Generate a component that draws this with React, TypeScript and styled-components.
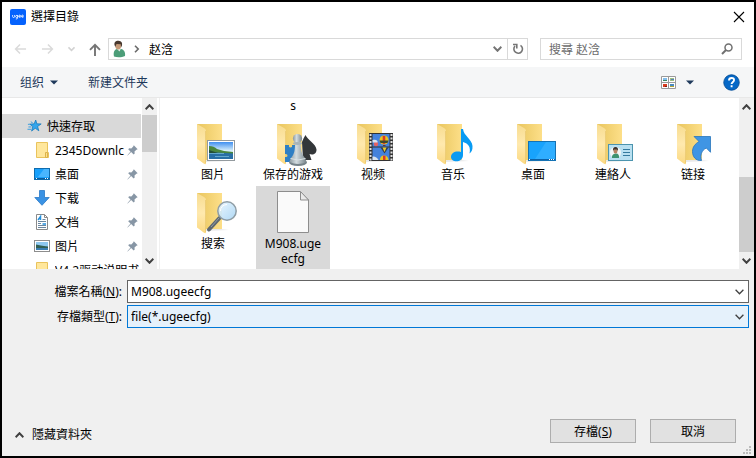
import React from "react";
import styled, { createGlobalStyle } from "styled-components";

const GlobalStyle = createGlobalStyle`
  *, *::before, *::after { box-sizing: border-box; }
  body {
    margin: 0;
    background: #000;
    color: #000;
    font-family: "Noto Sans", "Noto Sans CJK TC", "Noto Sans CJK SC", sans-serif;
    font-size: 12px;
    line-height: 15px;
  }
  button, input, select { font: inherit; color: inherit; margin: 0; }
  button { border: 0; padding: 0; background: none; }
  svg { display: block; flex: none; }
`;

/* ---------- frame ---------- */

const Window = styled.div`
  position: relative;
`;

const Dialog = styled.main`
  display: flex;
  flex-direction: column;
  min-height: 100vh;
  border: 2px solid #000;
  background: #fff;
`;

const TitleBar = styled.header`
  display: flex;
  align-items: center;
  gap: 5px;
  height: 29px;
  padding: 0 9px 0 8px;
`;

const AppBadge = styled.span`
  display: flex;
  align-items: center;
  justify-content: center;
  width: 16px;
  height: 16px;
  border-radius: 2px;
  background: #0562fd;
`;

const Title = styled.h1`
  flex: 1;
  margin: 0;
  font-size: 12px;
  font-weight: 400;
`;

const IconButton = styled.button`
  display: flex;
  align-items: center;
  justify-content: center;
  flex: none;
`;

const NavBar = styled.nav`
  display: flex;
  align-items: center;
  height: 36px;
  padding: 0 12px;
`;

const NavButtons = styled.div`
  display: flex;
  align-items: center;
  justify-content: space-between;
  flex: none;
  width: 94px;
  padding-right: 7px;
`;

const AddressBar = styled.div`
  display: flex;
  align-items: center;
  flex: 1;
  height: 22px;
  border: 1px solid #d9d9d9;
`;

const UserButton = styled(IconButton)`
  gap: 8px;
  padding-left: 3px;
`;

const Crumb = styled.button`
  flex: 1;
  padding-left: 9px;
  text-align: left;
`;

const AddressButton = styled(IconButton)<{ $divided?: boolean }>`
  width: 20px;
  height: 20px;
  border-left: ${(p) => (p.$divided ? "1px solid #d9d9d9" : "0")};
`;

const SearchBox = styled.label`
  display: flex;
  align-items: center;
  flex: none;
  width: 202px;
  height: 22px;
  margin-left: 12px;
  padding: 0 8px;
  border: 1px solid #d9d9d9;
`;

const SearchInput = styled.input`
  flex: 1;
  min-width: 0;
  border: 0;
  padding: 0;
  outline: 0;
  background: none;
  &::placeholder { color: #6d6d6d; opacity: 1; }
`;

const Toolbar = styled.div`
  display: flex;
  align-items: center;
  height: 31px;
  padding: 0 14px 0 18px;
  border-bottom: 1px solid #e8e8e8;
  background: #f5f6f7;
  color: #1e395b;
`;

const ToolButton = styled.button`
  display: flex;
  align-items: center;
  gap: 6px;
  margin-right: 30px;
`;

const ViewTools = styled.div`
  display: flex;
  align-items: center;
  margin-left: auto;
  gap: 10px;
`;

const HelpButton = styled(IconButton)`
  margin-left: 19px;
`;

/* ---------- browsing area ---------- */

const Explorer = styled.section`
  display: flex;
  height: 171px;
  overflow: hidden;
`;

const Sidebar = styled.ul`
  flex: none;
  width: 140px;
  margin: 0;
  padding: 16px 1px 0 0;
  list-style: none;
  overflow: hidden;
`;

const SideRow = styled.li<{ $root?: boolean }>`
  display: flex;
  align-items: center;
  height: 24px;
  padding-left: ${(p) => (p.$root ? "25px" : "32px")};
  background: ${(p) => (p.$root ? "#d9d9d9" : "transparent")};
`;

const SideLink = styled.a`
  display: flex;
  align-items: center;
  flex: 1;
  min-width: 0;
  gap: 5px;
  color: inherit;
  text-decoration: none;
`;

const SideName = styled.span`
  flex: 1;
  min-width: 0;
  overflow: hidden;
  white-space: nowrap;
`;

const PinCell = styled.span`
  width: 14px;
`;

const Splitter = styled.div`
  flex: none;
  width: 3px;
  border-right: 1px solid #f0f0f0;
`;

const ScrollTrack = styled.div`
  display: flex;
  flex-direction: column;
  justify-content: space-between;
  flex: none;
  width: 15px;
  background: #f0f0f0;
`;

const ScrollThumb = styled.div<{ $size: number }>`
  height: ${(p) => p.$size}px;
  background: #cdcdcd;
`;

const ThumbArea = styled.div<{ $atEnd?: boolean }>`
  display: flex;
  flex: 1;
  flex-direction: column;
  justify-content: ${(p) => (p.$atEnd ? "flex-end" : "flex-start")};
`;

const ScrollButton = styled(IconButton)`
  height: 17px;
`;

const FileGrid = styled.div`
  display: grid;
  flex: 1;
  min-width: 0;
  grid-template-columns: repeat(auto-fill, 74px);
  grid-template-rows: 19px 69px 83px;
  column-gap: 6px;
  padding-left: 16px;
  overflow: hidden;
`;

const OverflowName = styled.span`
  grid-column: 2;
  text-align: center;
`;

const Tile = styled.button<{ $first?: boolean; $selected?: boolean }>`
  display: flex;
  flex-direction: column;
  align-items: center;
  grid-column-start: ${(p) => (p.$first ? 1 : "auto")};
  background: ${(p) => (p.$selected ? "#d9d9d9" : "transparent")};
`;

const TileName = styled.span`
  max-width: 62px;
  overflow-wrap: anywhere;
  text-align: center;
`;

/* ---------- form ---------- */

const Form = styled.form`
  display: flex;
  flex: 1;
  flex-direction: column;
  padding: 11px 5px 13px 12px;
  background: #f0f0f0;
`;

const Fields = styled.div`
  display: grid;
  grid-template-columns: 108px 1fr;
  column-gap: 5px;
  row-gap: 2px;
  align-items: center;
`;

const FieldLabel = styled.label`
  text-align: right;
`;

const Combo = styled.div<{ $active?: boolean }>`
  display: flex;
  align-items: center;
  height: 23px;
  border: 1px solid ${(p) => (p.$active ? "#0078d7" : "#646464")};
  background: ${(p) => (p.$active ? "#e5f1fb" : "#fff")};
`;

const NameInput = styled.input`
  flex: 1;
  min-width: 0;
  height: 21px;
  padding: 0 0 0 3px;
  border: 0;
  outline: 0;
  background: none;
`;

const chevron =
  "url(\"data:image/svg+xml,%3Csvg xmlns='http://www.w3.org/2000/svg' width='9' height='6' viewBox='0 0 9 6' fill='none' stroke='%23404040' stroke-width='1.3'%3E%3Cpath d='M.6.8l3.900 4 3.900-4'/%3E%3C/svg%3E\")";

const TypeSelect = styled.select`
  flex: 1;
  min-width: 0;
  height: 21px;
  padding: 0 20px 0 3px;
  border: 0;
  outline: 0;
  appearance: none;
  background: ${chevron} no-repeat right 4px center;
`;

const ComboButton = styled(IconButton)`
  width: 17px;
  height: 21px;
`;

const Actions = styled.div`
  display: flex;
  align-items: center;
  gap: 14px;
  margin-top: auto;
  padding-right: 13px;
`;

const FolderToggle = styled.button`
  display: flex;
  align-items: center;
  gap: 8px;
  margin: 7px auto 0 1px;
`;

const PushButton = styled.button`
  width: 86px;
  height: 24px;
  border: 1px solid #adadad;
  background: #e1e1e1;
`;

const Grip = styled.div`
  position: absolute;
  right: 5px;
  bottom: 4px;
`;

/* ---------- drawings ---------- */

const Chevron = ({ up = false, color = "#404040", w = 9, weight = 1.3 }) => (
  <svg width={w} height="6" viewBox="0 0 9 6" fill="none" stroke={color} strokeWidth={weight}>
    <path d={up ? "M.6 5.200l3.900-4 3.900 4" : "M.6.8l3.900 4 3.900-4"} />
  </svg>
);

const Triangle = () => (
  <svg width="8" height="5" viewBox="0 0 8 5"><path d="M0 .5h8L4 4.500z" fill="#1e395b" /></svg>
);

const Arrow = ({ flip = false }) => (
  <svg width="13" height="12" viewBox="0 0 14 12" fill="none" stroke="#dadada" strokeWidth="1.600">
    <path d={flip ? "M1 6h11M7.500 1.200L12.300 6l-4.800 4.800" : "M13 6H2M6.500 1.200L1.700 6l4.800 4.800"} />
  </svg>
);

const Person = () => (
  <svg width="14" height="18" viewBox="0 0 14 18">
    <path d="M2 16.500C1 12 2.500 9.500 5 9l4 0c3 .8 4.500 3 4 7-3 1.500-8 1.700-11 .5z" fill="#4c9d78" />
    <path d="M4.500 8.500l3 3 1.500-3z" fill="#e8efe9" />
    <ellipse cx="6.200" cy="5.700" rx="2.900" ry="3.800" fill="#c69a78" />
    <path d="M2.500 5C2 1.500 4.500.6 6.500.8c3 .1 4.200 2.200 3.400 5L9 7.500 8.700 4.300 4.500 4 3.300 7z" fill="#48382e" />
  </svg>
);

const Pin = () => (
  <svg width="11" height="11" viewBox="0 0 11 11" fill="#8796a5">
    <path d="M6.800.3l3.900 3.900-1.300.5-1.900 1.900.2 2-1 1-2.600-2.600L.7 10.500l-.3-.3L3.500 6.500 1.200 4.200l1-.9 2.100.2 1.900-1.900z" />
  </svg>
);

const Star = () => (
  <svg width="15" height="14" viewBox="0 0 16 14">
    <path d="M9.300.6l1.200 4.100 4.600.1-3.800 2.700 1.300 4.600-3.800-2.700-3.900 3 1.300-4.800L3 5l4.600-.3z" fill="#34a6ec" stroke="#1379be" strokeWidth=".8" />
    <path d="M4 2.500l2 1M1 5.200h2M1.500 8h3.300M.5 10.500h4" stroke="#329be0" />
  </svg>
);

const SmallFolder = () => (
  <svg width="16" height="16" viewBox="0 0 16 16">
    <path d="M2.500.5h11v10h1v5h-12z" fill="#ffe79c" stroke="#e9c35c" />
    <path d="M11.500 10.500h2v5h-2z" fill="#ffe28a" stroke="#dcb34c" />
  </svg>
);

const SmallDesktop = () => (
  <svg width="16" height="12" viewBox="0 0 16 12">
    <rect x=".5" y=".5" width="15" height="11" fill="#18a0fb" stroke="#0f6cae" />
    <path d="M10 1h5v8H4z" fill="#49b6ff" />
    <path d="M1 10.500h14" stroke="#0d5d9e" /><path d="M2 10.500h1m8 0h1m1 0h1" stroke="#fff" />
  </svg>
);

const SmallDownload = () => (
  <svg width="16" height="16" viewBox="0 0 16 16">
    <path d="M5.500.5h5v7h4.700L8 15.300.8 7.500h4.700z" fill="#3a92e4" stroke="#2a79c6" strokeWidth=".8" />
  </svg>
);

const SmallDocument = () => (
  <svg width="16" height="16" viewBox="0 0 16 16">
    <path d="M2.500.5h8l3 3v12h-11z" fill="#fff" stroke="#8a8a8a" />
    <path d="M10.500.5v3h3" fill="none" stroke="#8a8a8a" />
    <path d="M8.500 5.500h3M4 7.500h8M4 9.500h3M4 11.500h8M4 13.500h8" stroke="#6c879f" />
    <path d="M4 6l2.500-3.500V6M8.500 10h3.500" stroke="#2490dd" strokeWidth="1.500" fill="none" />
  </svg>
);

const SmallPicture = () => (
  <svg width="16" height="12" viewBox="0 0 16 12">
    <rect x=".5" y=".5" width="15" height="11" fill="#fff" stroke="#8d8d8d" />
    <path d="M2 2h12v8H2z" fill="#8ec8ef" />
    <path d="M2 4.500c3 .5 6 1.500 12 2V8H2z" fill="#315f52" />
    <path d="M2 8h12v2H2z" fill="#3b7eb1" />
  </svg>
);

const FolderShape = () => (
  <>
    <path d="M28 43h17l8 1-24 1z" fill="#e9e9e9" />
    <path d="M21 7h25v36H28z" fill="url(#folderBack)" />
    <path d="M21 7l7 4q2 1 2 3v32q0 2-2 .8l-7-5.300z" fill="url(#folderFront)" />
    <path d="M29.500 14v32" stroke="#e6c468" strokeWidth=".7" />
  </>
);

const TileArt = ({ kind }: { kind: string }) => (
  <svg width="74" height="50" viewBox="0 0 74 50">
    <defs>
      <linearGradient id="folderBack"><stop offset="0" stopColor="#e9c65e" /><stop offset="1" stopColor="#fddf89" /></linearGradient>
      <linearGradient id="folderFront" x2="0" y2="1"><stop offset="0" stopColor="#f7dc90" /><stop offset=".5" stopColor="#ffe9ae" /><stop offset="1" stopColor="#fbd982" /></linearGradient>
      <linearGradient id="sky" x2="0" y2="1"><stop offset="0" stopColor="#3f8ff0" /><stop offset=".5" stopColor="#d5edfa" /></linearGradient>
      <linearGradient id="pawn"><stop offset="0" stopColor="#8a979d" /><stop offset=".4" stopColor="#d3dce0" /><stop offset="1" stopColor="#76838a" /></linearGradient>
      <linearGradient id="lens" x2="1" y2="1"><stop offset="0" stopColor="#e8f6ff" /><stop offset="1" stopColor="#a7d4f3" /></linearGradient>
    </defs>
    {kind !== "file" && <FolderShape />}
    {kind === "pictures" && (
      <>
        <rect x="31.500" y="23.500" width="27" height="20" fill="#fff" stroke="#939a9e" />
        <path d="M33 25h24v17H33z" fill="url(#sky)" />
        <path d="M33 29q5 0 8 3l7 2 9 1v2H33z" fill="#4a873d" />
        <path d="M33 35l24 1.500V42H33z" fill="#286fa5" />
        <path d="M33 36.500h15M39 39.500h14" stroke="#74b6d5" strokeWidth=".8" />
        <path d="M33 33l9 3H33z" fill="#244f36" />
      </>
    )}
    {kind === "games" && (
      <>
        <path d="M29 28h4q-.5 2.500 1.500 2.500T36 28h5v17h-4q.5-2.500-1.500-2.500T34 45h-5v-5q2.500.5 2.500-1.500T29 37z" fill="#2f7fc4" />
        <path d="M49.500 18c2 5 10.500 9 11 14.500.3 4-3.500 6-7 4.500l2 6H47l-1-18q1.500-4 3.500-7z" fill="#333639" />
        <ellipse cx="42" cy="45.500" rx="9" ry="3.500" fill="#76838a" />
        <path d="M39 26h5.500c.5 8 1 11 4.500 15l1.500 4q-8.500 4-17 0l1.500-4c3.500-4 4-8 4-15z" fill="url(#pawn)" />
        <circle cx="41.500" cy="21.500" r="4.600" fill="url(#pawn)" />
        <ellipse cx="41.500" cy="26.500" rx="4.500" ry="1.400" fill="#a8b4ba" />
        <path d="M34.500 41.500q7.500 3 15 0" fill="none" stroke="#dbe3e6" />
      </>
    )}
    {kind === "videos" && (
      <>
        <path d="M33 16h24v28H33z" fill="#333" />
        <path d="M36.500 17h17v12.500h-17zM36.500 30.500h17V43h-17z" fill="#4482dc" />
        <path d="M34.500 17v27M55.500 17v27" stroke="#e1e1e1" strokeWidth="2" strokeDasharray="2 1.500" />
        <circle cx="48" cy="23" r="4.500" fill="#e9c520" />
        <path d="M46.700 19v8h2.600v-8z" fill="#d83b26" /><path d="M43.500 23.500h9l-1 2.500h-7z" fill="#3d4a2c" />
        <path d="M47 28.500h2.500" stroke="#6b3722" />
        <path d="M44.500 30.500h8l-4 6z" fill="#303a4c" /><path d="M46.500 30.500h4l-2 4.500z" fill="#eacb2c" />
        <circle cx="40" cy="27" r="2.200" fill="#e66262" />
        <path d="M36.500 23q3-1 5 1v1.500h-5z" fill="#d8e3ef" />
        <path d="M36.500 39.500q4-.5 6 3.500h-6z" fill="#d8e3ef" />
        <path d="M44 43q0-4.500 4-4.500t4.500 4.500z" fill="#e9c520" /><path d="M47 38.700h2.500V43H47z" fill="#d83b26" />
      </>
    )}
    {kind === "music" && (
      <path d="M45 12h2c.8 7 9 10 9.500 17 .2 4-1 6-3 7.500 1.500-6-1-10-6.500-11.500v13c0 8-12 8-12 2 0-4.500 5-6.500 10-5z" fill="#099bf3" />
    )}
    {kind === "desktop" && (
      <>
        <rect x="32.500" y="24.500" width="27" height="19" fill="#18a3fd" stroke="#1472b4" />
        <path d="M50 25h9v17H39z" fill="#2faeff" />
        <path d="M33 42.500h26" stroke="#0d62a8" /><path d="M33 42.500h1m19 0h1m1 0h1m1 0h1" stroke="#fff" />
      </>
    )}
    {kind === "contacts" && (
      <>
        <rect x="32.500" y="27.500" width="24" height="16" fill="#b9e0f1" stroke="#4c94ae" />
        <circle cx="39.500" cy="35.500" r="5.500" fill="#f4f6f5" />
        <path d="M36 41q-.5-4 3.500-4.500t3.500 4.500z" fill="#3e9370" />
        <ellipse cx="39.500" cy="34" rx="2" ry="2.600" fill="#b78362" />
        <path d="M37 34q-.5-4 2.500-4t2.500 4l-1-1.500h-3z" fill="#40332c" />
        <path d="M47 32.500h7M47 35.500h7M47 38.500h7" stroke="#357a9e" />
      </>
    )}
    {kind === "links" && (
      <path d="M38 19.500h16.500v15.800l-4.200-4.300c-5 2.500-6.300 7.500-4.800 12.500-6 .5-9-4-9-9 0-4.500 2.500-7.500 6.500-10z" fill="#3f95e4" stroke="#2775bb" strokeWidth=".8" />
    )}
    {kind === "search" && (
      <>
        <path d="M43.500 32L33 43.500" stroke="#5f6870" strokeWidth="4" strokeLinecap="round" />
        <path d="M43 32L35 41" stroke="#929ca5" strokeWidth="1" />
        <circle cx="51" cy="25" r="9.200" fill="url(#lens)" fillOpacity=".9" stroke="#8f9da5" strokeWidth="1.500" />
        <path d="M44.500 25q0-6 6.500-6.500" fill="none" stroke="#fff" />
      </>
    )}
    {kind === "file" && (
      <>
        <path d="M21.500 5.500H44l8.500 8.500v32.500h-31z" fill="#fafafa" stroke="#8d8d8d" />
        <path d="M44.500 5.500v8.500h8z" fill="#e9e9e9" stroke="#8d8d8d" />
      </>
    )}
  </svg>
);

/* ---------- data ---------- */

const places = [
  { name: "2345Downlc", icon: <SmallFolder />, pinned: true },
  { name: "桌面", icon: <SmallDesktop />, pinned: true },
  { name: "下载", icon: <SmallDownload />, pinned: true },
  { name: "文档", icon: <SmallDocument />, pinned: true },
  { name: "图片", icon: <SmallPicture />, pinned: true },
  { name: "V4.2驱动说明书", icon: <SmallFolder />, pinned: false },
];

const files = [
  { name: "图片", kind: "pictures" },
  { name: "保存的游戏", kind: "games" },
  { name: "视频", kind: "videos" },
  { name: "音乐", kind: "music" },
  { name: "桌面", kind: "desktop" },
  { name: "連絡人", kind: "contacts" },
  { name: "链接", kind: "links" },
  { name: "搜索", kind: "search" },
  { name: "M908.ugeecfg", kind: "file" },
];

const Scrollbar = ({ size, atEnd }: { size: number; atEnd?: boolean }) => (
  <ScrollTrack>
    <ScrollButton type="button" aria-label="Scroll up"><Chevron up weight={2} /></ScrollButton>
    <ThumbArea $atEnd={atEnd}><ScrollThumb $size={size} /></ThumbArea>
    <ScrollButton type="button" aria-label="Scroll down"><Chevron weight={2} /></ScrollButton>
  </ScrollTrack>
);

export default function App() {
  return (
    <Window>
      <GlobalStyle />
      <Dialog>
        <TitleBar>
          <AppBadge>
            <svg width="12" height="6" viewBox="0 0 12 6" fill="none" stroke="#fff" strokeWidth=".8">
              <path d="M.6 1v1.500q0 1 1 1t1-1V1M5.600 1v3.300q0 .7-1.800.7M5.600 2.200a1 1.100 0 1 0-.1.800M6.700 2.300h2q-.2-1.200-1-1.200t-1 1.200 1.800 1M9.500 2.300h2q-.2-1.200-1-1.200t-1 1.200 1.800 1" />
            </svg>
          </AppBadge>
          <Title>選擇目錄</Title>
          <IconButton type="button" aria-label="Close">
            <svg width="12" height="12" viewBox="0 0 12 12" stroke="#000" strokeWidth="1.100"><path d="M1 1l10 10M11 1L1 11" /></svg>
          </IconButton>
        </TitleBar>

        <NavBar>
          <NavButtons>
            <IconButton type="button" aria-label="Back"><Arrow /></IconButton>
            <IconButton type="button" aria-label="Forward"><Arrow flip /></IconButton>
            <IconButton type="button" aria-label="Recent"><Chevron color="#d2d2d2" w={7} weight={2} /></IconButton>
            <IconButton type="button" aria-label="Up">
              <svg width="12" height="13" viewBox="0 0 12 13" fill="none" stroke="#757575" strokeWidth="1.900"><path d="M6 13V2M1 6.800l5-5 5 5" /></svg>
            </IconButton>
          </NavButtons>
          <AddressBar>
            <UserButton type="button" aria-label="User">
              <Person />
              <svg width="6" height="8" viewBox="0 0 6 8" fill="none" stroke="#6a6a6a" strokeWidth="1.600"><path d="M1 .8L4.200 4 1 7.200" /></svg>
            </UserButton>
            <Crumb type="button">赵浛</Crumb>
            <AddressButton type="button" aria-label="Previous locations"><Chevron color="#757575" weight={2} /></AddressButton>
            <AddressButton type="button" aria-label="Refresh" $divided>
              <svg width="12" height="12" viewBox="0 0 12 12" fill="none" stroke="#757575" strokeWidth="1.600"><path d="M8.500 2.300a4.300 4.300 0 1 1-5.500.7M1 1.500h3.800v4" /></svg>
            </AddressButton>
          </AddressBar>
          <SearchBox>
            <SearchInput type="text" placeholder="搜尋 赵浛" aria-label="搜尋 赵浛" />
            <svg width="12" height="12" viewBox="0 0 12 12" fill="none" stroke="#707070" strokeWidth="1.500"><circle cx="7.500" cy="4.500" r="3.500" /><path d="M5 7L1 11" strokeWidth="2" /></svg>
          </SearchBox>
        </NavBar>

        <Toolbar>
          <ToolButton type="button">组织 <Triangle /></ToolButton>
          <ToolButton type="button">新建文件夹</ToolButton>
          <ViewTools>
            <IconButton type="button" aria-label="View">
              <svg width="15" height="13" viewBox="0 0 15 13">
                <path d="M.5.5h14v12H.5zM7.500.5v12M.5 6.500h14" fill="#fff" stroke="#9a9a9a" />
                <path d="M2 2h4v3H2z" fill="#81bdea" /><path d="M2 4h4v1H2z" fill="#39845b" />
                <path d="M9 2h4v3H9z" fill="#9cbd82" /><path d="M10 3h3v1h-3z" fill="#527fb8" />
                <path d="M2 8h4v3H2z" fill="#d83c1f" /><path d="M4 10h2v1H4z" fill="#791e17" />
                <path d="M9 8h4v3H9z" fill="#498ac2" /><path d="M9 10h4v1H9z" fill="#b3a331" />
              </svg>
            </IconButton>
            <IconButton type="button" aria-label="More view options"><Triangle /></IconButton>
            <HelpButton type="button" aria-label="Help">
              <svg width="17" height="17" viewBox="0 0 17 17" fill="none">
                <circle cx="8.500" cy="8.500" r="7.700" fill="#0568c7" stroke="#07519b" />
                <path d="M6 6.500q0-2.500 2.600-2.500T11 6.200c0 1.700-2.400 1.800-2.400 3.900M8.600 11.300v1.900" stroke="#fff" strokeWidth="1.900" />
              </svg>
            </HelpButton>
          </ViewTools>
        </Toolbar>

        <Explorer>
          <Sidebar>
            <SideRow $root>
              <SideLink href="#quick"><Star /><SideName>快速存取</SideName></SideLink>
            </SideRow>
            {places.map((p) => (
              <SideRow key={p.name}>
                <SideLink href="#place">{p.icon}<SideName>{p.name}</SideName></SideLink>
                {p.pinned && <PinCell><Pin /></PinCell>}
              </SideRow>
            ))}
          </Sidebar>
          <Scrollbar size={37} />
          <Splitter />
          <FileGrid>
            <OverflowName>s</OverflowName>
            {files.map((f, i) => (
              <Tile key={f.kind} type="button" $first={i % 7 === 0} $selected={f.kind === "file"}>
                <TileArt kind={f.kind} />
                <TileName>{f.name}</TileName>
              </Tile>
            ))}
          </FileGrid>
          <Scrollbar size={75} atEnd />
        </Explorer>

        <Form onSubmit={(e) => e.preventDefault()}>
          <Fields>
            <FieldLabel htmlFor="fileName">檔案名稱(<u>N</u>):</FieldLabel>
            <Combo>
              <NameInput id="fileName" type="text" defaultValue="M908.ugeecfg" />
              <ComboButton type="button" aria-label="File name list"><Chevron /></ComboButton>
            </Combo>
            <FieldLabel htmlFor="fileType">存檔類型(<u>T</u>):</FieldLabel>
            <Combo $active>
              <TypeSelect id="fileType"><option>file(*.ugeecfg)</option></TypeSelect>
            </Combo>
          </Fields>
          <Actions>
            <FolderToggle type="button"><Chevron up weight={2} />隱藏資料夾</FolderToggle>
            <PushButton type="submit">存檔(<u>S</u>)</PushButton>
            <PushButton type="button">取消</PushButton>
          </Actions>
        </Form>
      </Dialog>
      <Grip>
        <svg width="8" height="8" viewBox="0 0 8 8" fill="#bcbcbc">
          <path d="M6 0h2v2H6zM3 3h2v2H3zM6 3h2v2H6zM0 6h2v2H0zM3 6h2v2H3zM6 6h2v2H6z" />
        </svg>
      </Grip>
    </Window>
  );
}
